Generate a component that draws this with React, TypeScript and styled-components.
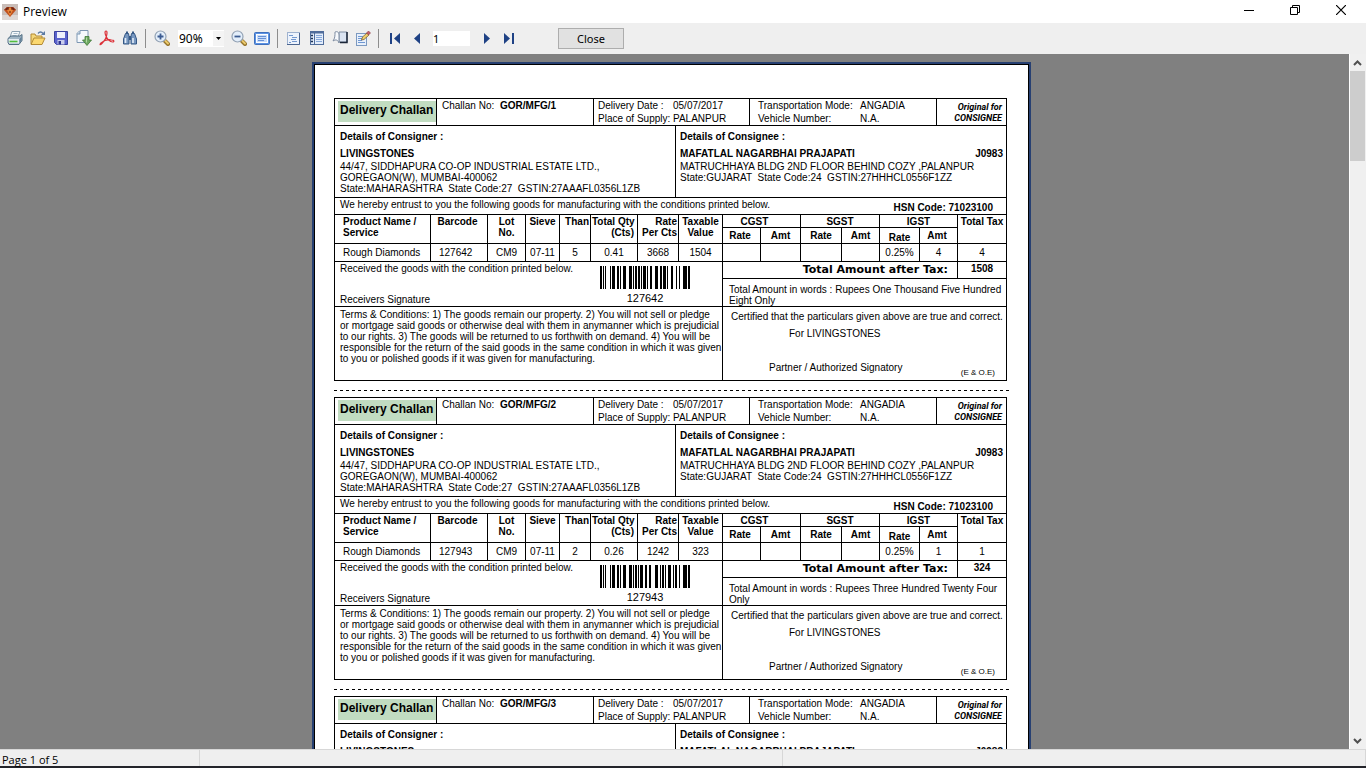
import React from 'react';
import styled, { createGlobalStyle } from 'styled-components';

const GlobalStyle = createGlobalStyle`
  *, *::before, *::after { box-sizing: border-box; }
  body { margin: 0; background: #808080; }
  button, input, select { font: inherit; color: inherit; margin: 0; }
`;

const Window = styled.div`
  display: flex;
  flex-direction: column;
  height: 100vh;
  font-family: 'Noto Sans', 'Open Sans', sans-serif;
  font-size: 12px;
  color: #000;
  background: #efefef;
  border-bottom: 2px solid #23242a;
`;

const TitleBar = styled.header`
  display: flex;
  align-items: center;
  height: 23px;
  flex: none;
  padding: 0 2px;
  background: #fff;
`;

const Title = styled.h1`
  margin: 0 auto 0 5px;
  font-family: 'Open Sans', sans-serif;
  font-size: 12px;
  font-weight: 400;
  line-height: 22px;
`;

const CaptionButton = styled.button`
  display: flex;
  align-self: flex-start;
  align-items: center;
  justify-content: center;
  width: 46px;
  height: 20px;
  padding: 0;
  border: 0;
  background: none;
`;

const ToolBar = styled.div`
  display: flex;
  align-items: center;
  height: 31px;
  flex: none;
  padding-left: 3px;
`;

const ToolButton = styled.button`
  display: flex;
  align-items: center;
  justify-content: center;
  width: 23px;
  height: 22px;
  padding: 0 0 2px;
  border: 0;
  background: none;
`;

const Separator = styled.span`
  width: 1px;
  height: 19px;
  margin: 0 4px;
  background: #8d8d8d;
`;

const ZoomBox = styled.label`
  display: flex;
  align-items: center;
  width: 46px;
  height: 17px;
  margin: 0 3px 0 5px;
  background: #fff;
`;

const ZoomSelect = styled.select`
  appearance: none;
  flex: 1;
  min-width: 0;
  height: 17px;
  padding: 0 0 0 1px;
  border: 0;
  background: none;
  line-height: 17px;
`;

const DropMark = styled.span`
  display: flex;
  align-items: center;
  justify-content: center;
  width: 11px;
  height: 15px;
  background: #f4f4f4;
`;

const PageInput = styled.input`
  width: 37px;
  height: 15px;
  margin: 0 4px;
  padding: 0;
  border: 0;
  background: #fff;
  font-size: 11px;
  line-height: 15px;
`;

const CloseButton = styled.button`
  width: 66px;
  height: 21px;
  margin-left: 38px;
  padding: 0;
  border: 1px solid #adadad;
  background: #e1e1e1;
  font-size: 11px;
  line-height: 19px;
`;

const Workspace = styled.div`
  display: flex;
  flex: 1;
  min-height: 0;
`;

const Desk = styled.main`
  flex: 1;
  min-width: 0;
  padding: 8px 6px 0 0;
  overflow-y: auto;
  scrollbar-width: none;
  background: #808080;
`;

const Paper = styled.div`
  width: 719px;
  max-width: 100%;
  margin: 0 auto;
  border: 2px solid #274072;
`;

const PaperInner = styled.div`
  padding: 33px 21px 0 19px;
  border: 1px solid #000;
  background: #fff;
`;

const ScrollBar = styled.div`
  display: flex;
  flex-direction: column;
  width: 17px;
  border-left: 1px solid #fff;
  background: #f0f0f0;
`;

const ScrollArrow = styled.button`
  display: flex;
  align-items: center;
  justify-content: center;
  width: 15px;
  height: 17px;
  padding: 0;
  border: 0;
  background: none;
`;

const ScrollTrack = styled.div`
  flex: 1;
`;

const ScrollThumb = styled.div`
  width: 15px;
  height: 90px;
  background: #cdcdcd;
`;

const StatusBar = styled.footer`
  display: flex;
  height: 17px;
  flex: none;
  border-top: 1px solid #d7d7d7;
`;

const StatusCell = styled.div<{ $w?: number }>`
  ${(p) => (p.$w ? `width: ${p.$w}px;` : 'flex: 1;')}
  padding-left: 2px;
  border-right: 1px solid #d7d7d7;
  font-family: 'Open Sans', sans-serif;
  font-size: 11px;
  line-height: 19px;
  white-space: nowrap;
`;

const Sheet = styled.section`
  border: 1px solid #000;
  font-family: 'Liberation Sans', Arial, sans-serif;
  font-size: 10px;
  line-height: 11px;
  white-space: nowrap;
`;

const Cut = styled.div`
  height: 16px;
  padding-top: 9px;
  margin-right: -3px;
`;

const CutLine = styled.div`
  height: 1px;
  background: repeating-linear-gradient(90deg, #000 0 3px, #fff 3px 6px);
`;

const HeadRow = styled.div`
  display: grid;
  grid-template-columns: 102px 157px 156px 187px minmax(0, 1fr);
  height: 27px;
  border-bottom: 1px solid #000;
`;

const HeadCell = styled.div<{ $label: number; $pad: number }>`
  display: grid;
  grid-template-columns: ${(p) => p.$label}px 1fr;
  grid-auto-rows: 13px;
  padding-left: ${(p) => p.$pad}px;
  border-right: 1px solid #000;
  line-height: 14px;
`;

const TitleCell = styled.div`
  padding: 2px 0 3px 3px;
  border-right: 1px solid #000;
`;

const DocTitle = styled.h2`
  margin: 0;
  padding-left: 2px;
  background: #c1dcc1;
  font-size: 12px;
  font-weight: 700;
  line-height: 18px;
  height: 21px;
`;

const CopyCell = styled.div`
  padding: 3px 4px 0 0;
  font-family: Roboto, 'Liberation Sans', sans-serif;
  font-size: 9px;
  font-weight: 700;
  font-style: italic;
  text-align: right;
`;

const Parties = styled.div`
  display: grid;
  grid-template-columns: 340px minmax(0, 1fr);
  border-bottom: 1px solid #000;
`;

const Party = styled.div`
  height: 71px;
  padding: 4px 3px 3px 5px;
  & + & { padding-left: 4px; border-left: 1px solid #000; }
`;

const PartyHead = styled.h3`
  margin: 0 0 3px;
  font-size: 10px;
  line-height: 14px;
`;

const PartyName = styled.div`
  display: flex;
  justify-content: space-between;
  font-weight: 700;
  line-height: 14px;
`;

const Entrust = styled.div`
  display: flex;
  justify-content: space-between;
  height: 17px;
  padding: 1px 13px 0 5px;
  border-bottom: 1px solid #000;
`;

const Hsn = styled.strong`
  padding-top: 3px;
`;

const Goods = styled.table`
  width: 100%;
  table-layout: fixed;
  border-collapse: separate;
  border-spacing: 0;
  font-size: 10px;
`;

type Align = 'left' | 'center' | 'right';

const Th = styled.th<{ $align?: Align; $low?: boolean; $sub?: boolean; $trail?: number }>`
  height: ${(p) => (p.$sub ? 16 : 13)}px;
  padding: ${(p) => (p.$low ? '5px 1px 0' : p.$sub ? '2px 1px 0' : '1px 1px 0')};
  ${(p) => (p.$align === 'left' ? 'padding-left: 8px;' : '')}
  ${(p) => (p.$trail ? `padding-right: ${p.$trail}px;` : '')}
  border-right: 1px solid #000;
  border-bottom: 1px solid #000;
  line-height: ${(p) => (p.$low ? 10 : 11)}px;
  text-align: ${(p) => p.$align ?? 'center'};
  vertical-align: top;
  &.last { border-right: 0; }
`;

const Td = styled.td<{ $align?: Align }>`
  height: 18px;
  padding: 0 1px 1px;
  ${(p) => (p.$align === 'left' ? 'padding-left: 8px;' : '')}
  border-right: 1px solid #000;
  border-bottom: 1px solid #000;
  line-height: 11px;
  text-align: ${(p) => p.$align ?? 'center'};
  vertical-align: middle;
  &:last-child { border-right: 0; }
`;

const Bottom = styled.div`
  display: grid;
  grid-template-columns: 388px minmax(0, 1fr);
`;

const Receipt = styled.div`
  display: flex;
  justify-content: space-between;
  height: 45px;
  padding: 1px 32px 1px 5px;
  border-right: 1px solid #000;
  border-bottom: 1px solid #000;
`;

const ReceiptText = styled.div`
  display: flex;
  flex-direction: column;
  justify-content: space-between;
`;

const CodeBox = styled.figure`
  margin: 0;
  padding-top: 3px;
  font-size: 11px;
  line-height: 18px;
  text-align: center;
  svg { display: block; }
`;

const Totals = styled.div`
  border-bottom: 1px solid #000;
`;

const TotalRow = styled.div`
  display: grid;
  grid-template-columns: 235px minmax(0, 1fr);
  height: 17px;
  border-bottom: 1px solid #000;
  font-weight: 700;
`;

const TotalLabel = styled.div`
  padding-right: 9px;
  border-right: 1px solid #000;
  font-family: 'DejaVu Sans', sans-serif;
  font-size: 11px;
  line-height: 15px;
  text-align: right;
`;

const TotalValue = styled.div`
  line-height: 14px;
  text-align: center;
`;

const Words = styled.div`
  height: 27px;
  padding: 5px 0 0 6px;
  white-space: pre-line;
`;

const Terms = styled.div`
  height: 73px;
  padding: 2px 0 0 5px;
  border-right: 1px solid #000;
  white-space: pre;
`;

const Certificate = styled.div`
  display: flex;
  flex-direction: column;
  height: 73px;
  padding: 4px 0 1px 8px;
  line-height: 12px;
`;

const ForFirm = styled.div`
  padding: 5px 0 0 58px;
`;

const SignRow = styled.div`
  display: flex;
  justify-content: space-between;
  align-items: flex-end;
  margin-top: auto;
  padding: 0 11px 0 38px;
`;

const Signatory = styled.span`
  padding-bottom: 5px;
`;

const Eoe = styled.small`
  font-size: 8px;
`;

const Glyph = ({ children, w = 16 }: { children: React.ReactNode; w?: number }) => (
  <svg width={w} height={16} viewBox={`0 0 ${w} 16`} aria-hidden="true">{children}</svg>
);

const GemIcon = () => (
  <Glyph>
    <rect width="16" height="16" fill="#c9bdb8" />
    <rect y="11" width="16" height="5" fill="#ded7d4" />
    <path d="M2 6l3-3h6l3 3-6 7z" fill="#c2501c" />
    <path d="M2 6h12l-3-3H5z" fill="#8b2f14" />
    <path d="M5 6l3-3 3 3-3 6z" fill="#e8873a" />
    <path d="M4 5h3M9 5h3M7 8h2" stroke="#5d1c0e" />
  </Glyph>
);

const PrintIcon = () => (
  <Glyph>
    <path d="M5 1.500h8l-2 5.500H3z" fill="#f6fafc" stroke="#8ba0b0" />
    <path d="M6.500 3.500h4M5.500 5.500h4" stroke="#a9bcca" />
    <path d="M1 8.500l3-2.500h9l2-1.500v6l-3 4H2l-1-2z" fill="#9fb5c4" stroke="#526e83" />
    <path d="M1.500 9h10.500v4.500H2z" fill="#e4ecf1" />
    <path d="M2.500 11.500h8" stroke="#52bd3d" strokeWidth="1.600" />
    <path d="M12.500 9l2-2.500v4l-2 2.500z" fill="#63819a" />
  </Glyph>
);

const OpenIcon = () => (
  <Glyph>
    <path d="M1 14V4h4l1 2h6v3" fill="#f4d77a" stroke="#b38a35" />
    <path d="M1 14.500l3-6.500h11l-3 6.500z" fill="#fbd870" stroke="#b38a35" />
    <path d="M8 3.500c1.500-2 3.500-2 5 0" fill="none" stroke="#5c7ba3" strokeWidth="1.300" />
    <path d="M11 5h4V1z" fill="#5c7ba3" />
  </Glyph>
);

const SaveIcon = () => (
  <Glyph>
    <path d="M1.500 1.500h13v13h-11l-2-2z" fill="#5a63cc" stroke="#3a419e" />
    <path d="M4 2h8v6H4z" fill="#eef0fc" />
    <path d="M4.500 10h7v4.500h-7z" fill="#c9cdec" />
    <path d="M5.500 11h2.500v3.500H5.500z" fill="#2d348f" />
  </Glyph>
);

const ExportIcon = () => (
  <Glyph>
    <path d="M4 .500h8v12H1v-9z" fill="#f5f9fd" stroke="#7d97b3" />
    <path d="M4 1v3H1" fill="#c8d8e8" stroke="#7d97b3" />
    <path d="M9 6.500h4V10h2.500L11 15.500 6.500 10H9z" fill="#6fa963" stroke="#3f7a37" strokeWidth=".8" />
    <path d="M10 7.500h1v5h-1z" fill="#b2d9a6" />
  </Glyph>
);

const PdfIcon = () => (
  <Glyph>
    <path
      d="M7 1c-1.500 0-1 3 0 5 1 3 4 6 6.500 6 2 0 2-2-1-2-4-1-8 1-10.500 3-2 2-.500 2.500 1.500 0C6 10 8 5 8 3c0-1 0-2-1-2z"
      fill="none"
      stroke="#dc3038"
      strokeWidth="1.200"
    />
  </Glyph>
);

const FindIcon = () => (
  <Glyph>
    <path d="M3.500 3.500h3l.500 3v7.500H1.500V9zM9.500 3.500h3l2 5.500v5H9V6.500z" fill="#7797c0" stroke="#355885" />
    <path d="M7 6h2v4H7z" fill="#355885" />
    <path d="M3.500 8v5M11 8v5" stroke="#e3edf8" strokeWidth="1.600" />
    <path d="M4 1.500h2v2H4zM10 1.500h2v2h-2z" fill="#355885" />
  </Glyph>
);

const ZoomIcon = ({ plus }: { plus?: boolean }) => (
  <Glyph>
    <path d="M11 11l3 3" stroke="#94732c" strokeWidth="4" strokeLinecap="round" />
    <path d="M11.500 11l2.500 2.500" stroke="#ecca6c" strokeWidth="2" strokeLinecap="round" />
    <circle cx="6.500" cy="6.500" r="5.500" fill="#e3eefa" stroke="#93a2b4" strokeWidth="1.200" />
    <path d={plus ? 'M3.500 6.500h6M6.500 3.500v6' : 'M3.500 6.500h6'} stroke="#3c5c92" strokeWidth="1.800" />
  </Glyph>
);

const FitIcon = () => (
  <Glyph>
    <rect x=".5" y="2.500" width="15" height="12" rx="1" fill="#5b92e4" stroke="#3f70bd" />
    <rect x="2.500" y="4.500" width="11" height="8" fill="#c9dcf9" stroke="#fff" />
    <path d="M4 6.500h8M4 8.500h8M4 10.500h6" stroke="#6590d6" />
  </Glyph>
);

const OutlineIcon = () => (
  <Glyph>
    <rect x="1.500" y="2.500" width="12" height="12" fill="#edf3fc" stroke="#9fb2cf" />
    <path d="M13.500 3v11.500H1" fill="none" stroke="#4b6590" />
    <path d="M3 5.500h4M6 7.500h5M5 9.500h5M6 11.500h5M3 12.500h2" stroke="#7398cf" />
  </Glyph>
);

const ThumbsIcon = () => (
  <Glyph>
    <rect x="1.500" y="1.500" width="13" height="13" fill="#e3edfb" stroke="#506d9b" />
    <path d="M1 2.500h14" stroke="#506d9b" strokeWidth="2" />
    <path d="M5.500 2v12" stroke="#506d9b" />
    <path d="M2 5.500h2M2 8.500h2M2 11.500h2" stroke="#1f3558" strokeWidth="1.600" />
    <path d="M7 5.500h6M7 7.500h6M7 9.500h6M7 11.500h6" stroke="#86a8da" />
  </Glyph>
);

const BookIcon = () => (
  <Glyph>
    <path d="M7 2h8v10H7z" fill="#dbe4f2" stroke="#7f8da2" />
    <path d="M15 2v10.500H8" fill="none" stroke="#1b2638" strokeWidth="1.500" />
    <path d="M3 2c2-1 4 0 4 3v8c-1-3-3-4-6-2 2-3 2-5 2-9z" fill="#f6f9fd" stroke="#7f8da2" />
  </Glyph>
);

const EditIcon = () => (
  <Glyph>
    <rect x="1.500" y="3.500" width="10" height="12" fill="#e8f0fb" stroke="#7c99c0" />
    <path d="M3 6.500h5M3 8.500h4M3 10.500h4M3 12.500h7" stroke="#6f97d2" />
    <path d="M6.500 10l1-3L12 3l2 2-5 4.500z" fill="#f0cf6a" stroke="#7d6130" strokeWidth=".8" />
    <path d="M11.500 3l2-2 2 2-2 2z" fill="#c4606a" stroke="#8b3940" strokeWidth=".6" />
  </Glyph>
);

const NavIcon = ({ back, end }: { back?: boolean; end?: boolean }) => (
  <Glyph w={12}>
    <g transform={back ? 'translate(12 0) scale(-1 1)' : undefined} fill="#1f4285">
      <path d={end ? 'M1 3v11l6-5.500z' : 'M4 3v11l6-5.500z'} />
      {end && <rect x="9" y="3" width="2" height="11" />}
    </g>
  </Glyph>
);

const Chevron = ({ down }: { down?: boolean }) => (
  <svg width="9" height="6" viewBox="0 0 9 6" aria-hidden="true">
    <path d={down ? 'M1 1l3.500 3.500L8 1' : 'M1 5l3.500-3.500L8 5'} fill="none" stroke="#505050" strokeWidth="2" />
  </svg>
);

type Bar = [number, number];

const codeStart: Bar[] = [[0, 2], [3, 1], [5, 1], [10, 1], [12, 3], [17, 2], [20, 1], [23, 3], [29, 3], [33, 1], [35, 2]];

const Barcode = ({ bars }: { bars: Bar[] }) => (
  <svg width="90" height="23" viewBox="0 0 90 23" shapeRendering="crispEdges" aria-hidden="true">
    {[...codeStart, ...bars].map(([x, w]) => (
      <rect key={x} x={x} y="0" width={w} height="23" />
    ))}
  </svg>
);

const challans = [
  {
    no: 1, barcode: '127642', than: '5', qty: '0.41', rate: '3668', value: '1504', tax: '4', total: '1508',
    words: 'Rupees One Thousand Five Hundred\nEight Only',
    bars: [[38, 2], [41, 1], [43, 3], [47, 1], [50, 2], [55, 3], [60, 2], [63, 3], [67, 1], [71, 2], [76, 1], [79, 1], [83, 4], [88, 2]] as Bar[],
  },
  {
    no: 2, barcode: '127943', than: '2', qty: '0.26', rate: '1242', value: '323', tax: '1', total: '324',
    words: 'Rupees Three Hundred Twenty Four\nOnly',
    bars: [[38, 1], [40, 3], [45, 2], [49, 2], [55, 3], [60, 1], [62, 2], [65, 1], [68, 3], [73, 1], [75, 2], [79, 1], [83, 4], [88, 2]] as Bar[],
  },
  {
    no: 3, barcode: '127944', than: '2', qty: '0.26', rate: '1242', value: '323', tax: '1', total: '324',
    words: 'Rupees Three Hundred Twenty Four\nOnly',
    bars: [[38, 1], [40, 3], [45, 2], [49, 2], [55, 3], [60, 1], [62, 2], [65, 1], [68, 3], [73, 1], [75, 2], [79, 1], [83, 4], [88, 2]] as Bar[],
  },
];

const columns = [96, 57, 38, 34, 31, 47, 41, 44, 38, 40, 41, 38, 40, 38, 48];

const terms = `Terms & Conditions: 1) The goods remain our property. 2) You will not sell or pledge
or mortgage said goods or otherwise deal with them in anymanner which is prejudicial
to our rights. 3) The goods will be returned to us forthwith on demand. 4) You will be
responsible for the return of the said goods in the same condition in which it was given
to you or polished goods if it was given for manufacturing.`;

const Challan = ({ c }: { c: (typeof challans)[number] }) => (
  <Sheet>
    <HeadRow>
      <TitleCell><DocTitle>Delivery Challan</DocTitle></TitleCell>
      <HeadCell $label={58} $pad={5}>
        <span>Challan No:</span><strong>GOR/MFG/{c.no}</strong>
      </HeadCell>
      <HeadCell $label={75} $pad={4}>
        <span>Delivery Date :</span><span>05/07/2017</span>
        <span>Place of Supply:</span><span>PALANPUR</span>
      </HeadCell>
      <HeadCell $label={102} $pad={8}>
        <span>Transportation Mode:</span><span>ANGADIA</span>
        <span>Vehicle Number:</span><span>N.A.</span>
      </HeadCell>
      <CopyCell>Original for<br />CONSIGNEE</CopyCell>
    </HeadRow>
    <Parties>
      <Party>
        <PartyHead>Details of Consigner :</PartyHead>
        <PartyName>LIVINGSTONES</PartyName>
        <div>44/47, SIDDHAPURA CO-OP INDUSTRIAL ESTATE LTD.,</div>
        <div>GOREGAON(W), MUMBAI-400062</div>
        <div>State:MAHARASHTRA&nbsp; State Code:27&nbsp; GSTIN:27AAAFL0356L1ZB</div>
      </Party>
      <Party>
        <PartyHead>Details of Consignee :</PartyHead>
        <PartyName><span>MAFATLAL NAGARBHAI PRAJAPATI</span><span>J0983</span></PartyName>
        <div>MATRUCHHAYA BLDG 2ND FLOOR BEHIND COZY ,PALANPUR</div>
        <div>State:GUJARAT&nbsp; State Code:24&nbsp; GSTIN:27HHHCL0556F1ZZ</div>
      </Party>
    </Parties>
    <Entrust>
      <span>We hereby entrust to you the following goods for manufacturing with the conditions printed below.</span>
      <Hsn>HSN Code: 71023100</Hsn>
    </Entrust>
    <Goods>
      <colgroup>{columns.map((w, i) => <col key={i} width={w} />)}</colgroup>
      <thead>
        <tr>
          <Th rowSpan={2} $align="left">Product Name /<br />Service</Th>
          <Th rowSpan={2} $trail={4}>Barcode</Th>
          <Th rowSpan={2}>Lot<br />No.</Th>
          <Th rowSpan={2}>Sieve</Th>
          <Th rowSpan={2} $align="right">Than</Th>
          <Th rowSpan={2} $align="right" $trail={3}>Total Qty<br />(Cts)</Th>
          <Th rowSpan={2} $align="right">Rate<br />Per Cts</Th>
          <Th rowSpan={2}>Taxable<br />Value</Th>
          <Th colSpan={2} $trail={15}>CGST</Th>
          <Th colSpan={2}>SGST</Th>
          <Th colSpan={2}>IGST</Th>
          <Th rowSpan={2} className="last">Total Tax</Th>
        </tr>
        <tr>
          <Th $sub $trail={4}>Rate</Th><Th $sub>Amt</Th>
          <Th $sub>Rate</Th><Th $sub>Amt</Th>
          <Th $sub $low>Rate</Th><Th $sub $trail={4}>Amt</Th>
        </tr>
      </thead>
      <tbody>
        <tr>
          <Td $align="left">Rough Diamonds</Td>
          <Td $align="left">{c.barcode}</Td>
          <Td>CM9</Td><Td>07-11</Td><Td>{c.than}</Td><Td>{c.qty}</Td><Td>{c.rate}</Td><Td>{c.value}</Td>
          <Td /><Td /><Td /><Td />
          <Td>0.25%</Td><Td>{c.tax}</Td><Td>{c.tax}</Td>
        </tr>
      </tbody>
    </Goods>
    <Bottom>
      <Receipt>
        <ReceiptText>
          <span>Received the goods with the condition printed below.</span>
          <span>Receivers Signature</span>
        </ReceiptText>
        <CodeBox>
          <Barcode bars={c.bars} />
          <figcaption>{c.barcode}</figcaption>
        </CodeBox>
      </Receipt>
      <Totals>
        <TotalRow>
          <TotalLabel>Total Amount after Tax:</TotalLabel>
          <TotalValue>{c.total}</TotalValue>
        </TotalRow>
        <Words>Total Amount in words : {c.words}</Words>
      </Totals>
      <Terms>{terms}</Terms>
      <Certificate>
        <span>Certified that the particulars given above are true and correct.</span>
        <ForFirm>For LIVINGSTONES</ForFirm>
        <SignRow>
          <Signatory>Partner / Authorized Signatory</Signatory>
          <Eoe>(E &amp; O.E)</Eoe>
        </SignRow>
      </Certificate>
    </Bottom>
  </Sheet>
);

export default function App() {
  return (
    <Window>
      <GlobalStyle />
      <TitleBar>
        <GemIcon />
        <Title>Preview</Title>
        <CaptionButton aria-label="Minimize">
          <svg width="10" height="10"><path d="M0 5.500h10" stroke="#000" /></svg>
        </CaptionButton>
        <CaptionButton aria-label="Restore">
          <svg width="10" height="10" fill="none" stroke="#000">
            <path d="M.5 2.500h7v7h-7zM2.500 2.500v-2h7v7h-2" />
          </svg>
        </CaptionButton>
        <CaptionButton aria-label="Close window">
          <svg width="10" height="10"><path d="M0 0l10 10M10 0L0 10" stroke="#000" strokeWidth="1.200" /></svg>
        </CaptionButton>
      </TitleBar>
      <ToolBar role="toolbar" aria-label="Preview tools">
        <ToolButton aria-label="Print"><PrintIcon /></ToolButton>
        <ToolButton aria-label="Open"><OpenIcon /></ToolButton>
        <ToolButton aria-label="Save"><SaveIcon /></ToolButton>
        <ToolButton aria-label="Export"><ExportIcon /></ToolButton>
        <ToolButton aria-label="Export to PDF"><PdfIcon /></ToolButton>
        <ToolButton aria-label="Find"><FindIcon /></ToolButton>
        <Separator />
        <ToolButton aria-label="Zoom in"><ZoomIcon plus /></ToolButton>
        <ZoomBox>
          <ZoomSelect aria-label="Zoom" defaultValue="90%">
            <option>90%</option>
          </ZoomSelect>
          <DropMark>
            <svg width="5" height="3" viewBox="0 0 5 3"><path d="M0 0h5L2.500 3z" /></svg>
          </DropMark>
        </ZoomBox>
        <ToolButton aria-label="Zoom out"><ZoomIcon /></ToolButton>
        <ToolButton aria-label="Full screen"><FitIcon /></ToolButton>
        <Separator />
        <ToolButton aria-label="Outline"><OutlineIcon /></ToolButton>
        <ToolButton aria-label="Thumbnails"><ThumbsIcon /></ToolButton>
        <ToolButton aria-label="Page settings"><BookIcon /></ToolButton>
        <ToolButton aria-label="Edit page"><EditIcon /></ToolButton>
        <Separator />
        <ToolButton aria-label="First page"><NavIcon back end /></ToolButton>
        <ToolButton aria-label="Previous page"><NavIcon back /></ToolButton>
        <PageInput aria-label="Page number" defaultValue="1" />
        <ToolButton aria-label="Next page"><NavIcon /></ToolButton>
        <ToolButton aria-label="Last page"><NavIcon end /></ToolButton>
        <CloseButton>Close</CloseButton>
      </ToolBar>
      <Workspace>
        <Desk>
          <Paper>
            <PaperInner>
              {challans.map((c) => (
                <React.Fragment key={c.no}>
                  <Challan c={c} />
                  <Cut><CutLine /></Cut>
                </React.Fragment>
              ))}
            </PaperInner>
          </Paper>
        </Desk>
        <ScrollBar>
          <ScrollArrow aria-label="Scroll up"><Chevron /></ScrollArrow>
          <ScrollTrack><ScrollThumb /></ScrollTrack>
          <ScrollArrow aria-label="Scroll down"><Chevron down /></ScrollArrow>
        </ScrollBar>
      </Workspace>
      <StatusBar>
        <StatusCell $w={200}>Page 1 of 5</StatusCell>
        <StatusCell $w={583} />
        <StatusCell />
      </StatusBar>
    </Window>
  );
}
